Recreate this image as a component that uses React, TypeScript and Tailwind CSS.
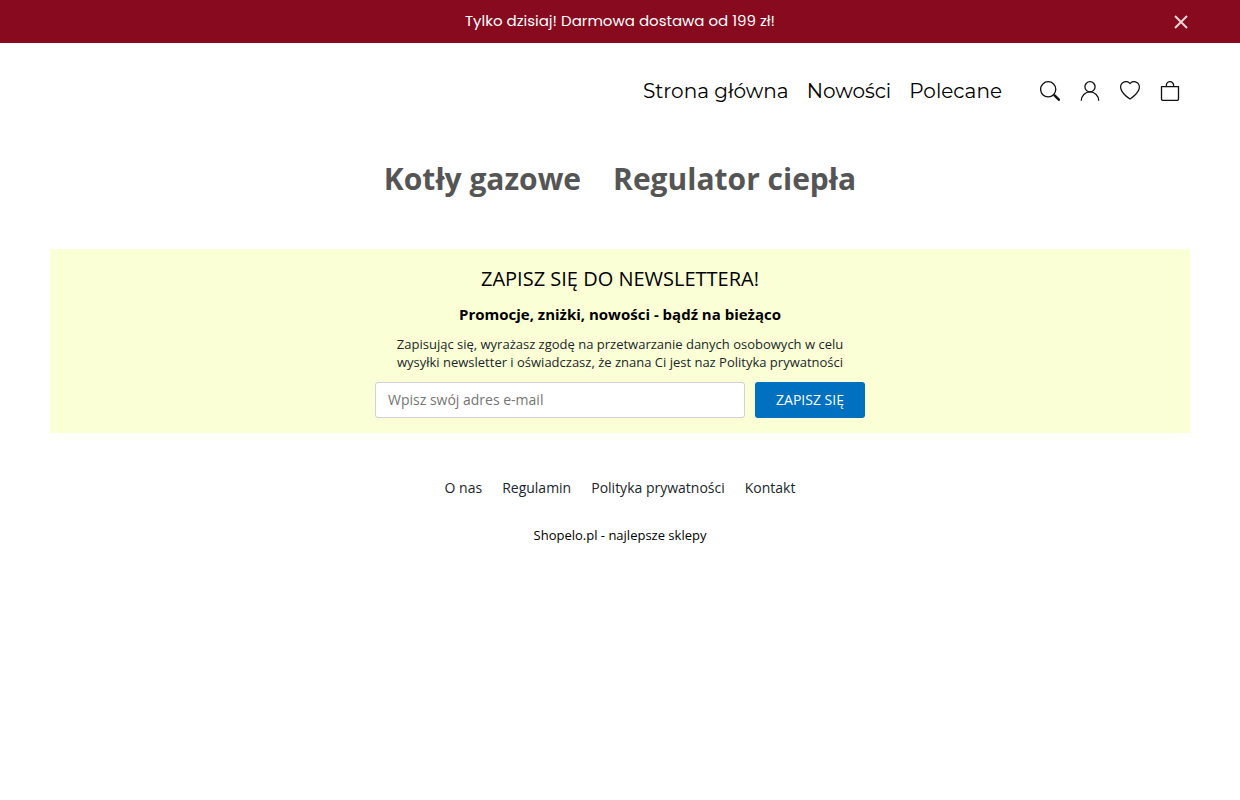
import type { ReactNode } from 'react';
import { BsHeart } from 'react-icons/bs';

const menu = ['Strona główna', 'Nowości', 'Polecane'];
const categories = ['Kotły gazowe', 'Regulator ciepła'];
const footerLinks = ['O nas', 'Regulamin', 'Polityka prywatności', 'Kontakt'];

function Icon({ children }: { children: ReactNode }) {
  return (
    <svg viewBox="0 0 20 20" className="size-5 fill-none stroke-current" strokeWidth="1.3" aria-hidden="true">
      {children}
    </svg>
  );
}

export default function App() {
  return (
    <div className="min-h-screen bg-white font-['Open_Sans',sans-serif] text-black">
      <div className="grid h-[43px] grid-cols-[1fr_auto_1fr] items-center bg-[#870a1e] text-white">
        <p className="col-start-2 font-['Poppins','Inter',sans-serif] text-[15px]">Tylko dzisiaj! Darmowa dostawa od 199 zł!</p>
        <button type="button" aria-label="Zamknij" className="mr-[52px] justify-self-end text-[#ebd3d7]">
          <svg viewBox="0 0 14 14" className="size-[14px] fill-none stroke-current" strokeWidth="2" aria-hidden="true">
            <path d="M1 1l12 12M13 1L1 13" />
          </svg>
        </button>
      </div>
      <header className="flex h-24 items-center justify-end pr-[60px]">
        <nav className="flex gap-[18px] font-['Montserrat','Inter',sans-serif] text-[20px]">
          {menu.map((m) => <a key={m} href="#">{m}</a>)}
        </nav>
        <div className="ml-[38px] flex gap-5 text-[#111]">
          <button type="button" aria-label="Szukaj">
            <Icon>
              <circle cx="8.2" cy="8.3" r="7.6" />
              <path d="M13.5 13.4l1.6 1.6" />
              <path d="M14.8 14.7l4 4" strokeWidth="2.5" strokeLinecap="round" />
            </Icon>
          </button>
          <button type="button" aria-label="Konto">
            <Icon>
              <circle cx="10" cy="5.8" r="5.1" />
              <path d="M1.3 19.8v-.3a8.7 8.6 0 0 1 17.4 0v.3" />
            </Icon>
          </button>
          <button type="button" aria-label="Ulubione"><BsHeart size={20} /></button>
          <button type="button" aria-label="Koszyk">
            <Icon>
              <path d="M1.5 5.6h17v12.4a1.4 1.4 0 0 1-1.4 1.4H2.900a1.4 1.4 0 0 1-1.4-1.4z" strokeLinejoin="round" />
              <path d="M6.400 5.600V4.300a3.600 3.600 0 0 1 7.200 0V5.600" />
            </Icon>
          </button>
        </div>
      </header>
      <nav className="flex h-[110px] justify-center gap-8 pt-5 text-[30px] leading-10 font-bold text-[#555]">
        {categories.map((c) => <a key={c} href="#">{c}</a>)}
      </nav>
      <section className="mx-[50px] flex flex-col items-center bg-[#faffd6] pt-4 pb-[15px] text-center">
        <h2 className="text-[20px] leading-7">ZAPISZ SIĘ DO NEWSLETTERA!</h2>
        <p className="mt-[11px] text-[15px] leading-5 font-bold">Promocje, zniżki, nowości - bądź na bieżąco</p>
        <p className="mt-[11px] text-[13px] leading-[18px] text-[#212529]">Zapisując się, wyrażasz zgodę na przetwarzanie danych osobowych w celu<br />wysyłki newsletter i oświadczasz, że znana Ci jest naz Polityka prywatności</p>
        <form className="mt-[11px] flex gap-[10px]" onSubmit={(e) => e.preventDefault()}>
          <input type="email" aria-label="Adres e-mail" placeholder="Wpisz swój adres e-mail" className="h-9 w-[370px] rounded-[3px] border border-[#ced4da] bg-white px-3 pb-0.5 text-[14px] placeholder:text-[#757575]" />
          <button type="submit" className="h-9 w-[110px] rounded-[3px] bg-[#0070c0] pb-0.5 text-[14px] text-white">ZAPISZ SIĘ</button>
        </form>
      </section>
      <footer className="flex flex-col items-center pt-[45px]">
        <nav className="flex gap-5 text-[14px] leading-5 text-[#212529]">
          {footerLinks.map((l) => <a key={l} href="#">{l}</a>)}
        </nav>
        <a href="#" className="mt-[27px] text-[13px] leading-5">Shopelo.pl - najlepsze sklepy</a>
      </footer>
    </div>
  );
}
